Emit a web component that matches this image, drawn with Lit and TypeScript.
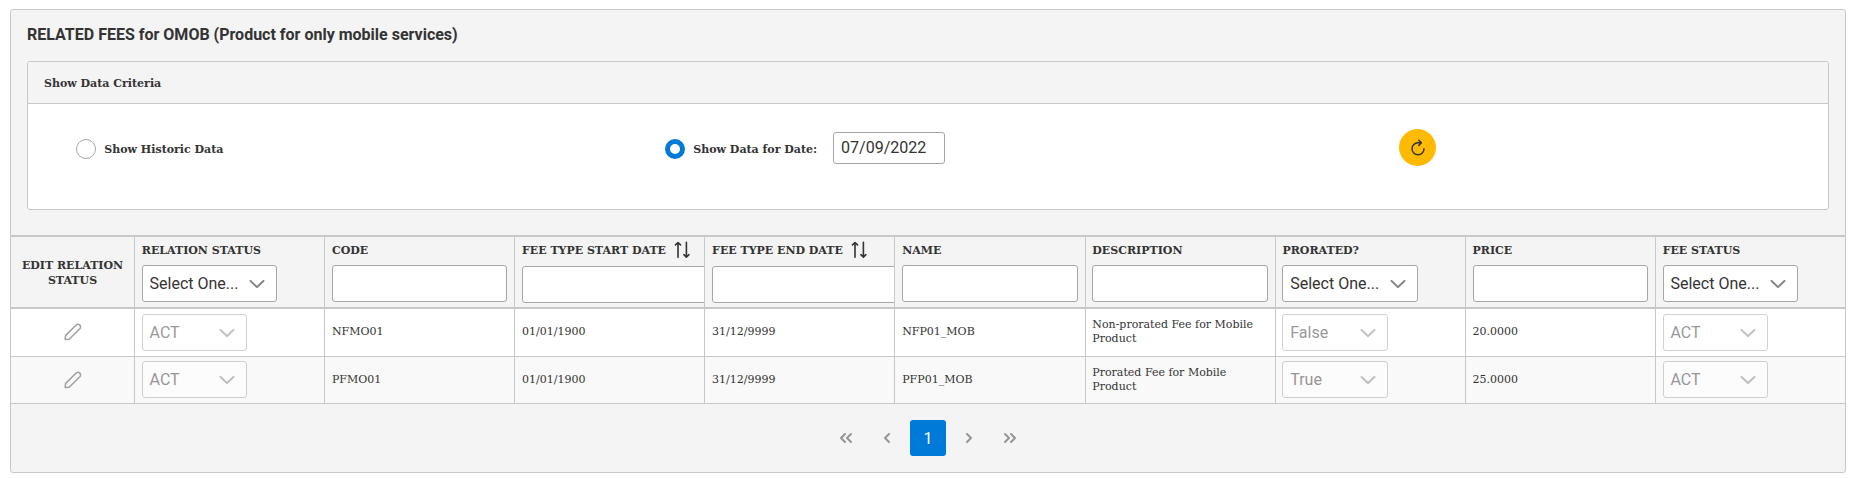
import { LitElement, html, css, svg, nothing } from "lit";
import { customElement, property } from "lit/decorators.js";
import { classMap } from "lit/directives/class-map.js";

const chevron = svg`<path d="M1.3 3.9 L7 10.2 L12.7 3.9" />`;

@customElement("fee-select")
class FeeSelect extends LitElement {
  @property() label = "";
  @property({ type: Boolean, reflect: true }) disabled = false;

  static styles = css`
    :host {
      display: flex;
      box-sizing: border-box;
      align-items: center;
      justify-content: space-between;
      width: 135.2px;
      height: 37px;
      padding: 0 11px 0 6.8px;
      border: 1px solid #a6a6a6;
      border-radius: 3px;
      background: #fff;
      color: #333;
      font: 16px/19px Roboto, sans-serif;
    }
    :host([disabled]) {
      width: 105.2px;
      opacity: 0.5;
    }
    .icon {
      width: 16px;
      height: 14px;
      fill: none;
      stroke: #848484;
      stroke-width: 1.8;
      stroke-linecap: round;
      stroke-linejoin: round;
    }
  `;

  render() {
    return html`<span>${this.label}</span>
      <svg class="icon" viewBox="0 0 14 14" preserveAspectRatio="none">${chevron}</svg>`;
  }
}

interface Column {
  title: string;
  kind: "edit" | "select" | "text" | "date";
}

const columns: Column[] = [
  { title: "EDIT RELATION STATUS", kind: "edit" },
  { title: "RELATION STATUS", kind: "select" },
  { title: "CODE", kind: "text" },
  { title: "FEE TYPE START DATE", kind: "date" },
  { title: "FEE TYPE END DATE", kind: "date" },
  { title: "NAME", kind: "text" },
  { title: "DESCRIPTION", kind: "text" },
  { title: "PRORATED?", kind: "select" },
  { title: "PRICE", kind: "text" },
  { title: "FEE STATUS", kind: "select" },
];

const rows: string[][] = [
  ["", "ACT", "NFMO01", "01/01/1900", "31/12/9999", "NFP01_MOB", "Non-prorated Fee for Mobile Product", "False", "20.0000", "ACT"],
  ["", "ACT", "PFMO01", "01/01/1900", "31/12/9999", "PFP01_MOB", "Prorated Fee for Mobile Product", "True", "25.0000", "ACT"],
];

@customElement("app-root")
class AppRoot extends LitElement {
  static styles = css`
    :host {
      display: block;
      padding: 9px 3px 0 10px;
      color: #333;
      font: 11px/15px "DejaVu Serif", serif;
    }
    * {
      box-sizing: border-box;
    }
    svg {
      display: block;
      flex: none;
      fill: none;
      stroke: currentColor;
      stroke-linecap: round;
      stroke-linejoin: round;
    }
    input {
      display: block;
      margin: 0;
      border: 1px solid #a6a6a6;
      border-radius: 3px;
      background: #fff;
      color: #333;
      font: 16px/19px Roboto, sans-serif;
      padding: 0 7px;
      outline: none;
    }
    .panel {
      height: 464px;
      border: 1px solid #c8c8c8;
      border-radius: 3px;
      background: #f4f4f4;
    }
    .title {
      margin: 0;
      padding: 15px 16px 0;
      height: 51px;
      font: 700 16px/19px Roboto, sans-serif;
    }
    .criteria {
      margin: 0 16px 25px;
      height: 149px;
      border: 1px solid #c8c8c8;
      border-radius: 3px;
      background: #fff;
      overflow: hidden;
    }
    .criteria-head {
      height: 42px;
      padding: 14px 16px 0;
      border-bottom: 1px solid #c8c8c8;
      background: #f4f4f4;
      font-weight: 700;
    }
    .criteria-body {
      display: grid;
      grid-template-columns: 589px 734px 1fr;
      align-items: center;
      padding: 25px 0 0 48px;
      font-weight: 700;
    }
    .option {
      display: flex;
      align-items: center;
    }
    .radio {
      width: 20px;
      height: 20px;
      margin: 3px 8.3px 0 0;
      border: 1px solid #a6a6a6;
      border-radius: 50%;
      background: #fff;
    }
    .radio.on {
      border: 5px solid #007ad9;
    }
    .option label {
      margin-top: 3px;
    }
    .date {
      width: 112px;
      height: 32px;
      margin-left: 16px;
    }
    .refresh {
      display: flex;
      align-items: center;
      justify-content: center;
      width: 37px;
      height: 37px;
      border-radius: 50%;
      background: #ffba01;
    }
    .row {
      display: grid;
      grid-template-columns: 123px repeat(9, minmax(0, 1fr));
      height: 48px;
      border-bottom: 1px solid #c8c8c8;
      background: #fff;
    }
    .row.odd {
      height: 47px;
      background: #f9f9f9;
    }
    .row.head {
      height: 74px;
      border-top: 2px solid #c8c8c8;
      border-bottom: 2px solid #c8c8c8;
      background: #f4f4f4;
      font-weight: 700;
    }
    .cell {
      display: flex;
      flex-direction: column;
      justify-content: center;
      padding: 0 6.77px;
      border-left: 1px solid #c8c8c8;
      line-height: 14px;
      overflow: hidden;
    }
    .row:not(.odd):not(.head) .cell:not(.pick) {
      padding-bottom: 1px;
    }
    .row.odd .pick {
      padding-bottom: 1px;
    }
    .cell.edit {
      align-items: center;
      border-left: 0;
      color: #a0a0a0;
      text-align: center;
    }
    .head .cell {
      justify-content: flex-start;
      line-height: 15px;
    }
    .head .cell.edit {
      justify-content: center;
      padding: 2px 8px 0;
      color: inherit;
    }
    .caption {
      display: flex;
      height: 28px;
      padding-top: 6px;
      white-space: nowrap;
    }
    .date-col .caption {
      height: 29px;
    }
    .sort {
      margin: -2px 0 0 8px;
    }
    .filter {
      flex: none;
      width: 100%;
      height: 37px;
    }
    .date-col .filter {
      width: 200px;
    }
    .pager {
      display: flex;
      justify-content: center;
      gap: 5px;
      padding-top: 16px;
    }
    .page {
      display: flex;
      align-items: center;
      justify-content: center;
      width: 36px;
      height: 36px;
      border-radius: 3px;
      color: #949494;
      font: 16px/19px Roboto, sans-serif;
    }
    .page.current {
      background: #007ad9;
      color: #fff;
    }
  `;

  private headCell(c: Column) {
    if (c.kind === "edit") return html`<div class="cell edit">${c.title}</div>`;
    return html`<div class=${classMap({ cell: true, "date-col": c.kind === "date" })}>
      <div class="caption">
        <span>${c.title}</span>
        ${c.kind === "date"
          ? html`<svg class="sort" width="17" height="18" viewBox="0 0 17 18" stroke-width="1.6">
              <path d="M4 16.3V1.8M1.5 3.9L4 1.5L6.5 3.9M12.4 1.3V15.8M9.9 13.7L12.4 16.1L14.9 13.7" />
            </svg>`
          : nothing}
      </div>
      ${c.kind === "select"
        ? html`<fee-select label="Select One..."></fee-select>`
        : html`<input class="filter" />`}
    </div>`;
  }

  private bodyCell(c: Column, value: string) {
    if (c.kind === "edit")
      return html`<div class="cell edit">
        <svg width="18" height="18" viewBox="0 0 18 18" stroke-width="1.5">
          <path d="M1.2 16.6L1.5 12.6L12.2 2Q14 .5 15.8 2.1Q17.3 3.9 15.8 5.7L5.2 16.3Z" />
        </svg>
      </div>`;
    return html`<div class=${classMap({ cell: true, pick: c.kind === "select" })}>
      ${c.kind === "select" ? html`<fee-select disabled label=${value}></fee-select>` : value}
    </div>`;
  }

  private arrow(d: string) {
    return html`<span class="page">
      <svg width="16" height="16" viewBox="0 0 16 16" stroke-width="2"><path d=${d} /></svg>
    </span>`;
  }

  render() {
    return html`<section class="panel">
      <h1 class="title">RELATED FEES for OMOB (Product for only mobile services)</h1>
      <div class="criteria">
        <div class="criteria-head">Show Data Criteria</div>
        <div class="criteria-body">
          <div class="option"><span class="radio"></span><label>Show Historic Data</label></div>
          <div class="option">
            <span class="radio on"></span><label>Show Data for Date:</label>
            <input class="date" value="07/09/2022" />
          </div>
          <div class="refresh">
            <svg width="16" height="17" viewBox="0 0 16 17" stroke-width="1.5">
              <path d="M14 9.7A6 6 0 1 1 8 3.8H11.2M8.8 1.3L11.4 3.8L8.8 6.4" />
            </svg>
          </div>
        </div>
      </div>
      <div class="row head">${columns.map((c) => this.headCell(c))}</div>
      ${rows.map(
        (r, i) => html`<div class=${classMap({ row: true, odd: i % 2 === 1 })}>
          ${columns.map((c, j) => this.bodyCell(c, r[j]))}
        </div>`
      )}
      <div class="pager">
        ${this.arrow("M7 4L3 8L7 12M13 4L9 8L13 12")}
        ${this.arrow("M10 4L6 8L10 12")}
        <span class="page current">1</span>
        ${this.arrow("M6 4L10 8L6 12")}
        ${this.arrow("M3 4L7 8L3 12M9 4L13 8L9 12")}
      </div>
    </section>`;
  }
}
